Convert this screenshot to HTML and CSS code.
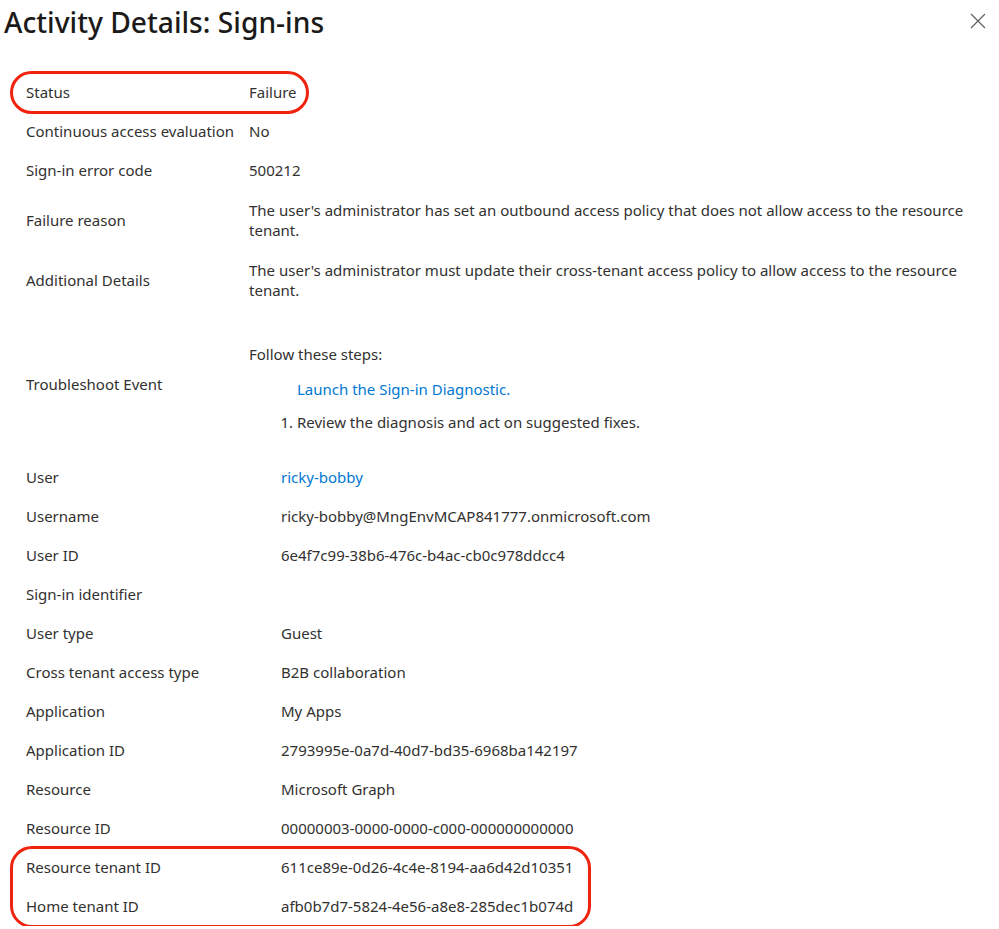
FILE: index.html
```html
<!DOCTYPE html>
<html lang="en">
<head>
<meta charset="utf-8">
<title>Activity Details: Sign-ins</title>
<link rel="stylesheet" href="styles.css">
</head>
<body>
<div class="panel">
  <header class="header">
    <h1 class="title">Activity Details: Sign-ins</h1>
    <button class="close" aria-label="Close">
      <svg width="16" height="16" viewBox="0 0 16 16"><path d="M1 1 L15 15 M15 1 L1 15" stroke="#605e5c" stroke-width="1.2" fill="none"/></svg>
    </button>
  </header>

  <section class="details group-a">
    <div class="row hl-row">
      <div class="label">Status</div>
      <div class="value">Failure</div>
    </div>
    <div class="row">
      <div class="label">Continuous access evaluation</div>
      <div class="value">No</div>
    </div>
    <div class="row">
      <div class="label">Sign-in error code</div>
      <div class="value">500212</div>
    </div>
    <div class="row multi">
      <div class="label">Failure reason</div>
      <div class="value">The user's administrator has set an outbound access policy that does not allow access to the resource tenant.</div>
    </div>
    <div class="row multi">
      <div class="label">Additional Details</div>
      <div class="value">The user's administrator must update their cross-tenant access policy to allow access to the resource tenant.</div>
    </div>
    <div class="row trouble">
      <div class="label">Troubleshoot Event</div>
      <div class="value">
        <div class="steps-title">Follow these steps:</div>
        <div class="launch"><a href="#" class="link">Launch the Sign-in Diagnostic.</a></div>
        <ol class="steps">
          <li>Review the diagnosis and act on suggested fixes.</li>
        </ol>
      </div>
    </div>
  </section>

  <section class="details group-b">
    <div class="row"><div class="label">User</div><div class="value"><a href="#" class="link">ricky-bobby</a></div></div>
    <div class="row"><div class="label">Username</div><div class="value">ricky-bobby@MngEnvMCAP841777.onmicrosoft.com</div></div>
    <div class="row"><div class="label">User ID</div><div class="value">6e4f7c99-38b6-476c-b4ac-cb0c978ddcc4</div></div>
    <div class="row"><div class="label">Sign-in identifier</div><div class="value"></div></div>
    <div class="row"><div class="label">User type</div><div class="value">Guest</div></div>
    <div class="row"><div class="label">Cross tenant access type</div><div class="value">B2B collaboration</div></div>
    <div class="row"><div class="label">Application</div><div class="value">My Apps</div></div>
    <div class="row"><div class="label">Application ID</div><div class="value">2793995e-0a7d-40d7-bd35-6968ba142197</div></div>
    <div class="row"><div class="label">Resource</div><div class="value">Microsoft Graph</div></div>
    <div class="row"><div class="label">Resource ID</div><div class="value">00000003-0000-0000-c000-000000000000</div></div>
    <div class="hl-group">
      <div class="row"><div class="label">Resource tenant ID</div><div class="value">611ce89e-0d26-4c4e-8194-aa6d42d10351</div></div>
      <div class="row"><div class="label">Home tenant ID</div><div class="value">afb0b7d7-5824-4e56-a8e8-285dec1b074d</div></div>
    </div>
  </section>
</div>
</body>
</html>
```

FILE: styles.css
```css
* { box-sizing: border-box; }
html, body {
  margin: 0;
  padding: 0;
  background: #ffffff;
}
body {
  font-family: "Noto Sans", "Open Sans", sans-serif;
  font-size: 15px;
  color: #323130;
  line-height: 20px;
}
.panel {
  width: 999px;
  padding: 0 0 0 12px;
}
.header {
  display: flex;
  justify-content: space-between;
  align-items: flex-start;
  height: 72.5px;
  margin-left: -8px;
}
.title {
  margin: 0;
  padding-top: 3px;
  font-size: 28.2px;
  line-height: 38px;
  font-weight: 500;
  color: #1b1a19;
}
.close {
  margin: 13px 13px 0 0;
  padding: 0;
  border: none;
  background: none;
  width: 16px;
  height: 16px;
  display: flex;
}
.details { display: flex; flex-direction: column; }
.row {
  display: grid;
  align-items: center;
  min-height: 39px;
  padding-left: 14px;
}
.group-a .row { grid-template-columns: 223px 1fr; }
.group-b .row { grid-template-columns: 255px auto; }
.row.multi { min-height: 60px; padding-top: 10px; padding-bottom: 10px; }
.value { padding-right: 16px; }
.row.trouble .value { padding-top: 34.5px; padding-bottom: 25.5px; }
.launch { margin-top: 15px; padding-left: 48px; }
.steps {
  margin: 13px 0 0 0;
  padding-left: 48px;
}
.link { color: #0078d4; text-decoration: none; }
.hl-row {
  width: fit-content;
  padding-right: 10px;
  border-radius: 20px;
  outline: 3px solid #f0230f;
  outline-offset: -1.5px;
}
.hl-row .value { padding-right: 0; }
.hl-group {
  width: fit-content;
  padding-right: 16px;
  border-radius: 20px;
  outline: 3px solid #f0230f;
  outline-offset: -1.5px;
}
.hl-group .value { padding-right: 0; }
```
